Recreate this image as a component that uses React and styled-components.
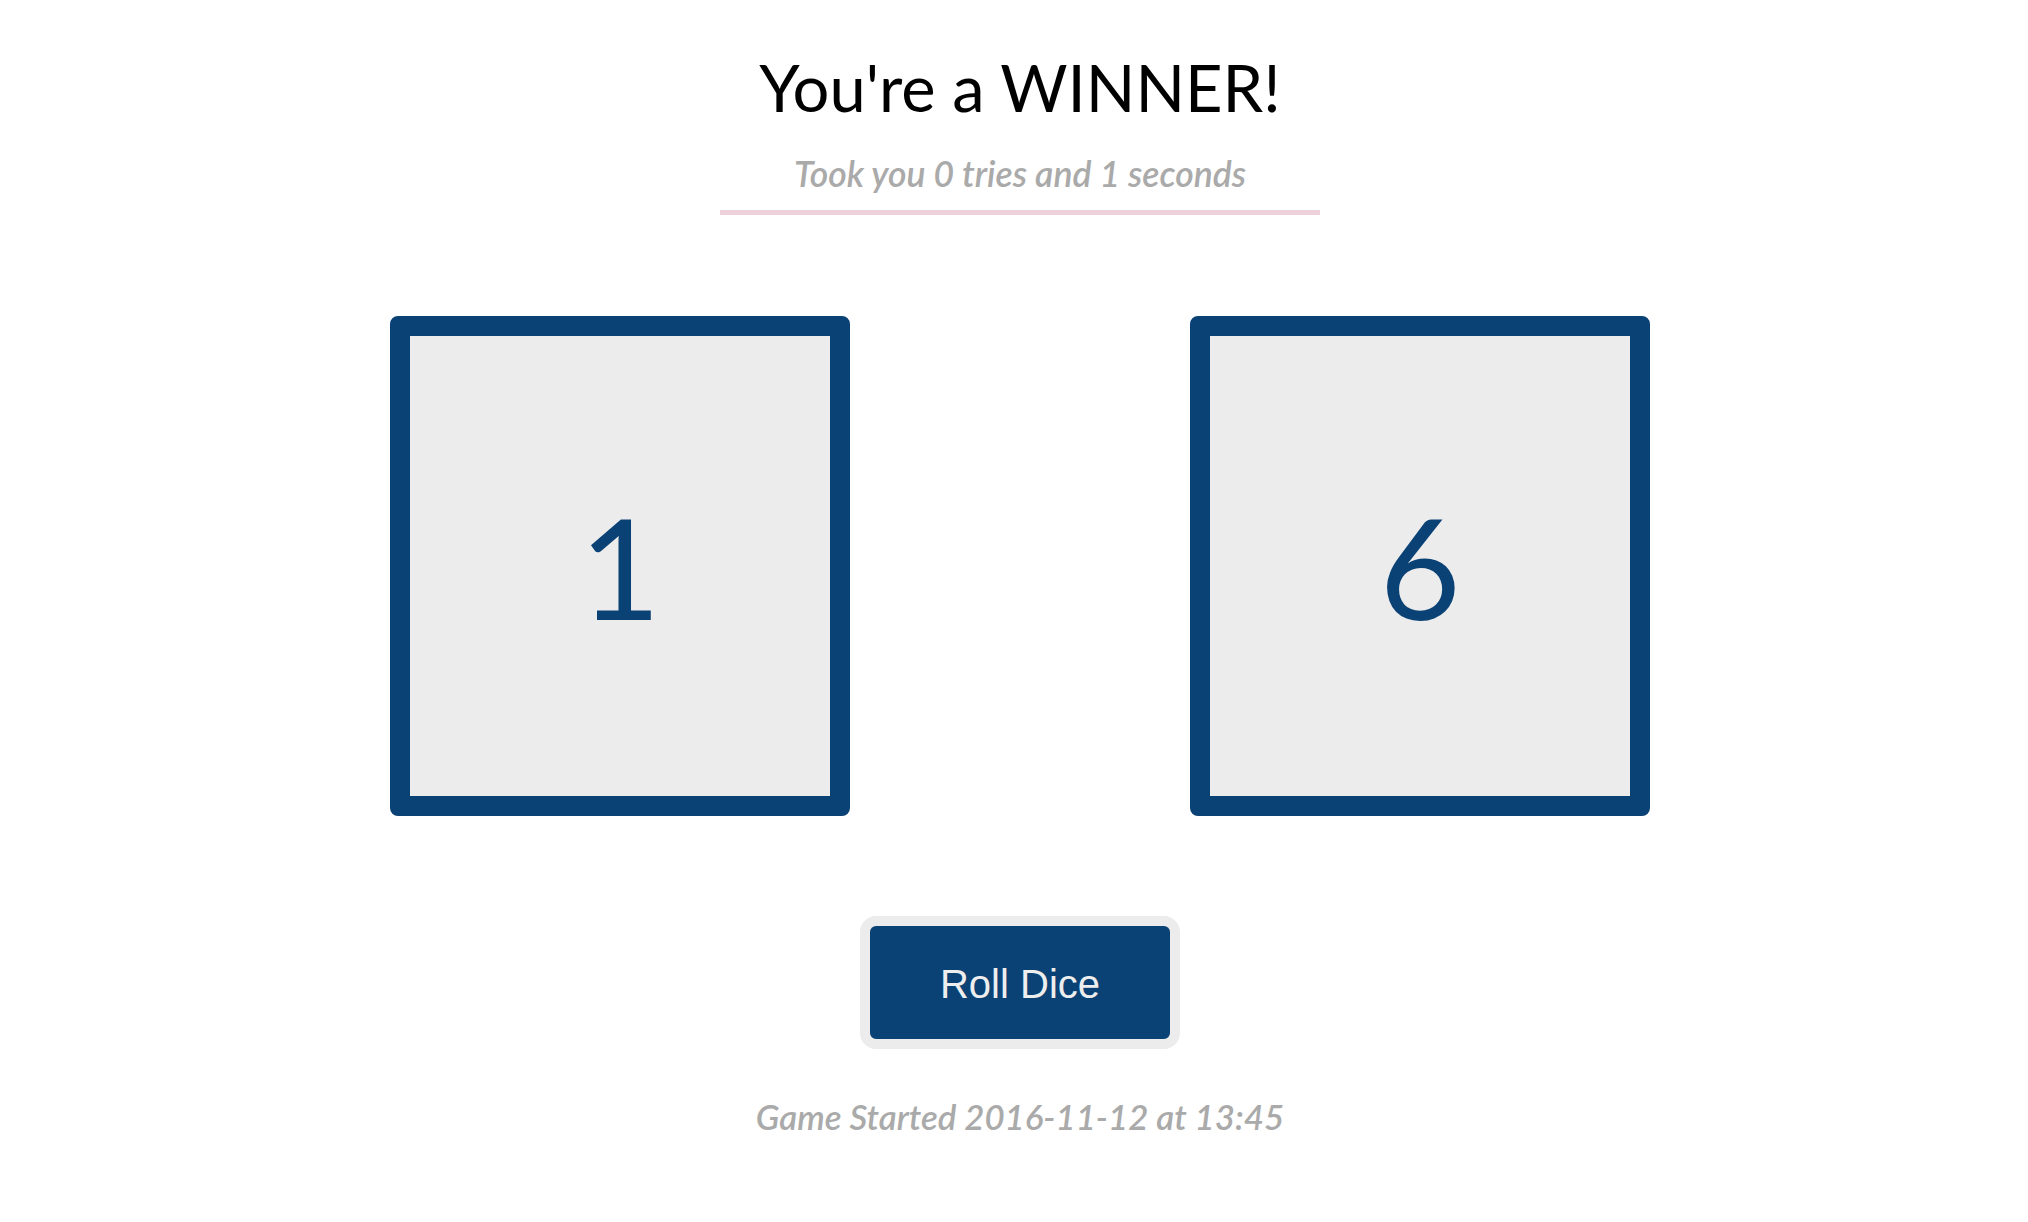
import React from "react";
import styled, { createGlobalStyle } from "styled-components";

const Global = createGlobalStyle`
  html, body { margin: 0; padding: 0; background: #ffffff; }
  body { font-family: Lato, "Open Sans", sans-serif; }
`;

const Page = styled.main`
  display: flex;
  flex-direction: column;
  align-items: center;
  padding: 48px 0 40px 12px;
`;

const Title = styled.h1`
  margin: 0;
  font-family: Lato, sans-serif;
  font-weight: 400;
  font-size: 65px;
  line-height: 78px;
  color: #000;
`;

const Subtitle = styled.p`
  margin: 27px 0 0;
  width: 600px;
  padding-bottom: 15px;
  border-bottom: 5px solid #ecd0da;
  text-align: center;
  font-family: Lato, sans-serif;
  font-style: italic;
  font-weight: 600;
  font-size: 35.5px;
  line-height: 42px;
  color: #aaaaaa;
`;

const DiceRow = styled.section`
  display: flex;
  justify-content: center;
  gap: 340px;
  margin-top: 101px;
`;

const Die = styled.div`
  box-sizing: border-box;
  width: 460px;
  height: 500px;
  border: 20px solid #0b4275;
  border-radius: 8px;
  background: #ececec;
  display: flex;
  align-items: center;
  justify-content: center;
  font-family: Lato, sans-serif;
  font-size: 140px;
  line-height: 1;
  color: #0b4275;
`;

const RollButton = styled.button`
  box-sizing: border-box;
  margin-top: 100px;
  width: 320px;
  height: 133px;
  padding: 3px 0 0;
  border: 10px solid #ececec;
  border-radius: 16px;
  background: #0b4275;
  color: #eeeeee;
  font-family: "Liberation Sans", Arial, sans-serif;
  font-size: 40px;
  cursor: pointer;
`;

const Footer = styled.p`
  margin: 47px 0 0;
  font-family: Lato, sans-serif;
  font-style: italic;
  font-weight: 600;
  font-size: 34.8px;
  line-height: 42px;
  color: #aaaaaa;
`;

export default function App() {
  const dice = [1, 6];
  return (
    <>
      <Global />
      <Page>
        <Title>You're a WINNER!</Title>
        <Subtitle>Took you 0 tries and 1 seconds</Subtitle>
        <DiceRow>
          {dice.map((d, i) => (
            <Die key={i}>{d}</Die>
          ))}
        </DiceRow>
        <RollButton>Roll Dice</RollButton>
        <Footer>Game Started 2016-11-12 at 13:45</Footer>
      </Page>
    </>
  );
}
